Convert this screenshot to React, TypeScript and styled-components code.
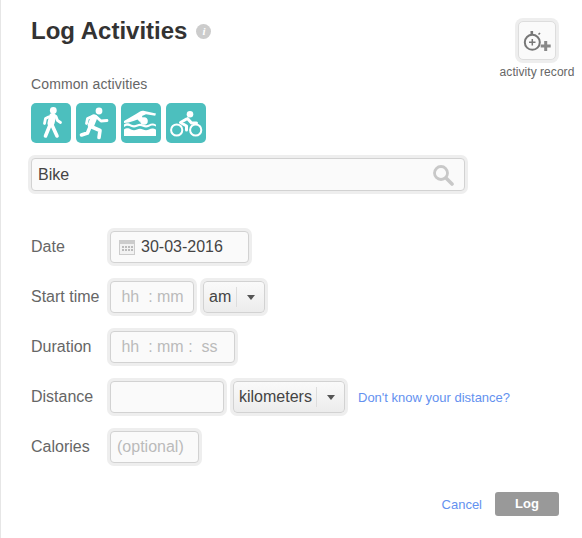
import React from "react";
import styled, { createGlobalStyle } from "styled-components";

const Global = createGlobalStyle`
  html, body { margin: 0; padding: 0; background: #fff; }
  body { font-family: "Liberation Sans", Arial, sans-serif; color: #666; }
`;

const Page = styled.div`
  width: 582px;
  height: 538px;
  box-sizing: border-box;
  border-left: 1px solid #e6e6e6;
  padding: 0 23px 0 30px;
  overflow: hidden;
`;

const Top = styled.div`
  display: flex;
  justify-content: space-between;
  align-items: flex-start;
`;

const Main = styled.div`
  display: flex;
  flex-direction: column;
  width: 434px;
`;

const TitleRow = styled.div`
  display: flex;
  align-items: center;
  gap: 9px;
  margin-top: 17px;
  height: 28px;
`;

const Title = styled.h1`
  margin: 0;
  font-size: 24px;
  line-height: 28px;
  font-weight: 700;
  color: #333;
`;

const Info = styled.span`
  width: 15px;
  height: 15px;
  margin-top: 1px;
  border-radius: 50%;
  background: #ccc;
  color: #fff;
  font: italic 700 11px/15px "Liberation Serif", serif;
  text-align: center;
`;

const SectionLabel = styled.div`
  margin-top: 31px;
  font-size: 14px;
  line-height: 16px;
  letter-spacing: 0.12px;
  color: #666;
`;

const Icons = styled.div`
  display: flex;
  gap: 5px;
  margin-top: 11px;
`;

const ActivityIcon = styled.div`
  width: 40px;
  height: 40px;
  border-radius: 5px;
  background: #4cbfbe;
  display: flex;
`;

const Field = styled.div<{ $w: number; $placeholder?: boolean }>`
  width: ${(p) => p.$w}px;
  height: 32px;
  box-sizing: border-box;
  display: flex;
  align-items: center;
  background: #fafafa;
  border: 1px solid #d2d2d2;
  border-radius: 4px;
  box-shadow: 0 0 0 3px #eee;
  font-size: 16px;
  color: ${(p) => (p.$placeholder ? "#bbb" : "#444")};
  padding: 0 6px;
  white-space: pre;
`;

const SearchField = styled(Field)`
  height: 33px;
  margin-top: 15px;
  justify-content: space-between;
  padding-right: 10px;
`;

const Aside = styled.div`
  width: 76px;
  margin-top: 21px;
  margin-right: -16px;
  display: flex;
  flex-direction: column;
  align-items: center;
`;

const RecordButton = styled.div`
  width: 38px;
  height: 39px;
  box-sizing: border-box;
  border: 1px solid #ddd;
  border-radius: 5px;
  background: #fafafa;
  box-shadow: 0 0 0 3px #eee;
  display: flex;
  align-items: center;
  justify-content: center;
`;

const RecordLabel = styled.div`
  margin-top: 5px;
  font-size: 12px;
  line-height: 14px;
  letter-spacing: 0.05px;
  color: #666;
  white-space: nowrap;
`;

const Form = styled.div`
  display: flex;
  flex-direction: column;
  gap: 18px;
  margin-top: 40px;
`;

const Row = styled.div`
  display: flex;
  align-items: center;
  height: 32px;
`;

const Label = styled.div`
  width: 79px;
  flex: none;
  font-size: 16px;
  color: #666;
`;

const Select = styled(Field)`
  margin-left: 9px;
  padding: 0 0 0 5px;
  background: linear-gradient(#fafafa, #ececec);
  color: #444;
`;

const Divider = styled.span`
  width: 1px;
  height: 20px;
  background: #ddd;
  margin-left: auto;
`;

const Caret = styled.span`
  width: 0;
  height: 0;
  margin: 1px 9px 0 10px;
  border-left: 4px solid transparent;
  border-right: 4px solid transparent;
  border-top: 5px solid #555;
`;

const HelpLink = styled.a`
  margin-left: 13px;
  font-size: 13px;
  color: #6491ef;
`;

const Actions = styled.div`
  display: flex;
  justify-content: flex-end;
  align-items: center;
  margin-top: 29px;
  gap: 13px;
`;

const Cancel = styled.a`
  font-size: 13px;
  color: #6491ef;
`;

const LogButton = styled.div`
  width: 64px;
  height: 24px;
  border-radius: 3px;
  background: #999;
  color: #fff;
  font-size: 13px;
  font-weight: 700;
  line-height: 24px;
  text-align: center;
`;

const CalendarSvg = styled.svg`
  flex: none;
  margin: 0 5px 0 2px;
`;

const Walk = () => (
  <svg width="40" height="40" viewBox="0 0 40 40" fill="none" stroke="#fff" strokeLinecap="round" strokeLinejoin="round">
    <circle cx="22.300" cy="7.500" r="3.400" fill="#fff" stroke="none" />
    <path d="M21.500 13.500L20 20" strokeWidth="7" />
    <path d="M17.500 14l-3 1.500-1 5M25 13.500l1.500 4 3 2" strokeWidth="2.800" />
    <path d="M19 22l-4.500 11M21 22l5 11" strokeWidth="3.600" />
  </svg>
);
const Run = () => (
  <svg width="40" height="40" viewBox="0 0 40 40" fill="none" stroke="#fff" strokeLinecap="round" strokeLinejoin="round">
    <circle cx="23" cy="8" r="3.400" fill="#fff" stroke="none" />
    <path d="M18 14.500L15 22" strokeWidth="6.500" />
    <path d="M20 13.500l5 4.500 6-.5M16 13.500l-4.500 2-1 5" strokeWidth="2.800" />
    <path d="M14 24l-2.500 6-6 2M16 24l8 3.500-1 7" strokeWidth="3.600" />
  </svg>
);
const Swim = () => (
  <svg width="40" height="40" viewBox="0 0 40 40" fill="#fff">
    <circle cx="23" cy="18" r="3.800" />
    <path d="M3 18l12-7 4-2.500c1.500-.8 3-.8 4.500-.4L35 10.500l-.8 2.200-9.200-1.500-4 1.800 1 3-3 3-2.500-2.500-4 1.500-5 1.500-4.500.5z" />
    <path d="M3 21.500c3-2 5-1 7 0s4 1 6 0 4-1 6 0 4 1 6 0 4-1.500 7 .2v1.800c-3-1.700-5-.8-7 .2s-4 1-6 0-4-1-6 0-4 1-6 0-4-1.700-7 .2z" />
    <path d="M3 26.500c3-2 5-1 7 0s4 1 6 0 4-1 6 0 4 1 6 0 4-1.500 7 .2V33H3z" />
  </svg>
);
const Bike = () => (
  <svg width="40" height="40" viewBox="0 0 40 40" fill="none" stroke="#fff" strokeLinecap="round" strokeLinejoin="round">
    <circle cx="24" cy="11.300" r="3.300" fill="#fff" stroke="none" />
    <path d="M20.500 16l-6 3.500 6 3.500v4M21.500 15.500l4 4.500h5" strokeWidth="3" />
    <circle cx="10.700" cy="27" r="5.600" strokeWidth="2" />
    <circle cx="29.700" cy="27" r="5.600" strokeWidth="2" />
  </svg>
);
const SearchIcon = () => (
  <svg width="22" height="22" viewBox="0 0 22 22" fill="none" stroke="#c8c8c8">
    <circle cx="9" cy="9" r="6.500" strokeWidth="2.800" />
    <path d="M14 14l6 6" strokeWidth="3.600" strokeLinecap="round" />
  </svg>
);
const Stopwatch = () => (
  <svg width="34" height="30" viewBox="0 0 34 30" fill="none" stroke="#777">
    <circle cx="12.300" cy="16.300" r="7.500" strokeWidth="2" />
    <path d="M11.800 5v4" strokeWidth="2.600" />
    <path d="M18.500 8.500l1.500-1.500" strokeWidth="1.600" />
    <path d="M9 16.300h6.500M12.300 13v6.500" strokeWidth="1.500" />
    <path d="M25.700 15v10M20.700 20h10" strokeWidth="3" stroke="#888" />
  </svg>
);
const Calendar = () => (
  <CalendarSvg width="17" height="17" viewBox="0 0 17 17">
    <rect x=".5" y="1.500" width="15" height="14" fill="#f2f2f2" stroke="#ccc" />
    <rect x="1" y="2" width="14" height="3" fill="#ccc" />
    <path d="M3 7h2v2H3zM6 7h2v2H6zM9 7h2v2H9zM12 7h2v2h-2zM3 10h2v2H3zM6 10h2v2H6zM9 10h2v2H9zM12 10h2v2h-2z" fill="#bbb" />
  </CalendarSvg>
);

export default function App() {
  return (
    <Page>
      <Global />
      <Top>
        <Main>
          <TitleRow>
            <Title>Log Activities</Title>
            <Info>i</Info>
          </TitleRow>
          <SectionLabel>Common activities</SectionLabel>
          <Icons>
            <ActivityIcon><Walk /></ActivityIcon>
            <ActivityIcon><Run /></ActivityIcon>
            <ActivityIcon><Swim /></ActivityIcon>
            <ActivityIcon><Bike /></ActivityIcon>
          </Icons>
          <SearchField $w={434}>
            <span>Bike</span>
            <SearchIcon />
          </SearchField>
        </Main>
        <Aside>
          <RecordButton><Stopwatch /></RecordButton>
          <RecordLabel>activity record</RecordLabel>
        </Aside>
      </Top>
      <Form>
        <Row>
          <Label>Date</Label>
          <Field $w={139}><Calendar />30-03-2016</Field>
        </Row>
        <Row>
          <Label>Start time</Label>
          <Field $w={84} $placeholder>{" hh  : mm"}</Field>
          <Select $w={62}>am<Divider /><Caret /></Select>
        </Row>
        <Row>
          <Label>Duration</Label>
          <Field $w={125} $placeholder>{" hh  : mm :  ss"}</Field>
        </Row>
        <Row>
          <Label>Distance</Label>
          <Field $w={114} />
          <Select $w={112}>kilometers<Divider /><Caret /></Select>
          <HelpLink>Don't know your distance?</HelpLink>
        </Row>
        <Row>
          <Label>Calories</Label>
          <Field $w={89} $placeholder>(optional)</Field>
        </Row>
      </Form>
      <Actions>
        <Cancel>Cancel</Cancel>
        <LogButton>Log</LogButton>
      </Actions>
    </Page>
  );
}
